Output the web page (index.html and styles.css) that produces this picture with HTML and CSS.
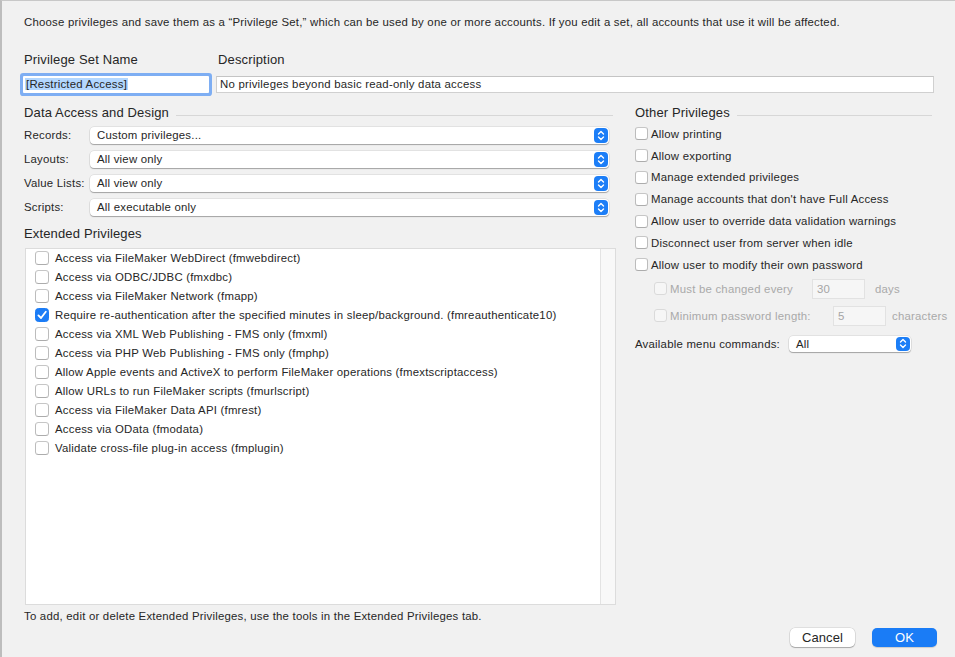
FILE: index.html
```html
<!DOCTYPE html>
<html>
<head>
<meta charset="utf-8">
<link rel="stylesheet" href="styles.css">
</head>
<body>
<div class="win">
  <p class="intro">Choose privileges and save them as a “Privilege Set,” which can be used by one or more accounts. If you edit a set, all accounts that use it will be affected.</p>

  <div class="name-row">
    <div class="name-col">
      <div class="hdr">Privilege Set Name</div>
      <div class="field focus"><span class="sel">[Restricted Access]</span></div>
    </div>
    <div class="desc-col">
      <div class="hdr">Description</div>
      <div class="field desc">No privileges beyond basic read-only data access</div>
    </div>
  </div>

  <div class="main">
    <div class="left">
      <div class="sect">Data Access and Design</div>
      <div class="prows">
        <div class="prow"><span class="plabel">Records:</span><div class="popup"><span>Custom privileges...</span><i class="step"><svg viewBox="0 0 14 15" width="14" height="15"><path d="M4.5 6 7 3.5 9.5 6M4.5 9 7 11.5 9.5 9" fill="none" stroke="#fff" stroke-width="1.4" stroke-linecap="round" stroke-linejoin="round"/></svg></i></div></div>
        <div class="prow"><span class="plabel">Layouts:</span><div class="popup"><span>All view only</span><i class="step"><svg viewBox="0 0 14 15" width="14" height="15"><path d="M4.5 6 7 3.5 9.5 6M4.5 9 7 11.5 9.5 9" fill="none" stroke="#fff" stroke-width="1.4" stroke-linecap="round" stroke-linejoin="round"/></svg></i></div></div>
        <div class="prow"><span class="plabel">Value Lists:</span><div class="popup"><span>All view only</span><i class="step"><svg viewBox="0 0 14 15" width="14" height="15"><path d="M4.5 6 7 3.5 9.5 6M4.5 9 7 11.5 9.5 9" fill="none" stroke="#fff" stroke-width="1.4" stroke-linecap="round" stroke-linejoin="round"/></svg></i></div></div>
        <div class="prow"><span class="plabel">Scripts:</span><div class="popup"><span>All executable only</span><i class="step"><svg viewBox="0 0 14 15" width="14" height="15"><path d="M4.5 6 7 3.5 9.5 6M4.5 9 7 11.5 9.5 9" fill="none" stroke="#fff" stroke-width="1.4" stroke-linecap="round" stroke-linejoin="round"/></svg></i></div></div>
      </div>
      <div class="hdr ext">Extended Privileges</div>
      <div class="list">
        <div class="list-body">
          <div class="lrow"><i class="cb"></i>Access via FileMaker WebDirect (fmwebdirect)</div>
          <div class="lrow"><i class="cb"></i>Access via ODBC/JDBC (fmxdbc)</div>
          <div class="lrow"><i class="cb"></i>Access via FileMaker Network (fmapp)</div>
          <div class="lrow"><i class="cb on"><svg viewBox="0 0 14 14" width="14" height="14"><path d="M3.4 7.4 6 10 10.8 3.8" fill="none" stroke="#fff" stroke-width="1.8" stroke-linecap="round" stroke-linejoin="round"/></svg></i>Require re-authentication after the specified minutes in sleep/background. (fmreauthenticate10)</div>
          <div class="lrow"><i class="cb"></i>Access via XML Web Publishing - FMS only (fmxml)</div>
          <div class="lrow"><i class="cb"></i>Access via PHP Web Publishing - FMS only (fmphp)</div>
          <div class="lrow"><i class="cb"></i>Allow Apple events and ActiveX to perform FileMaker operations (fmextscriptaccess)</div>
          <div class="lrow"><i class="cb"></i>Allow URLs to run FileMaker scripts (fmurlscript)</div>
          <div class="lrow"><i class="cb"></i>Access via FileMaker Data API (fmrest)</div>
          <div class="lrow"><i class="cb"></i>Access via OData (fmodata)</div>
          <div class="lrow"><i class="cb"></i>Validate cross-file plug-in access (fmplugin)</div>
        </div>
        <div class="scroll"></div>
      </div>
      <p class="foot">To add, edit or delete Extended Privileges, use the tools in the Extended Privileges tab.</p>
    </div>

    <div class="right">
      <div class="sect">Other Privileges</div>
      <div class="checks">
        <div class="crow"><i class="cb sm"></i>Allow printing</div>
        <div class="crow"><i class="cb sm"></i>Allow exporting</div>
        <div class="crow"><i class="cb sm"></i>Manage extended privileges</div>
        <div class="crow"><i class="cb sm"></i>Manage accounts that don't have Full Access</div>
        <div class="crow"><i class="cb sm"></i>Allow user to override data validation warnings</div>
        <div class="crow"><i class="cb sm"></i>Disconnect user from server when idle</div>
        <div class="crow"><i class="cb sm"></i>Allow user to modify their own password</div>
      </div>
      <div class="sub">
        <div class="srow"><i class="cb sm dis"></i><span class="slabel w1">Must be changed every</span><span class="num">30</span><span class="unit u1">days</span></div>
        <div class="srow"><i class="cb sm dis"></i><span class="slabel w2">Minimum password length:</span><span class="num">5</span><span class="unit u2">characters</span></div>
      </div>
      <div class="mrow"><span class="mlabel">Available menu commands:</span><div class="popup small"><span>All</span><i class="step"><svg viewBox="0 0 14 15" width="14" height="15"><path d="M4.5 6 7 3.5 9.5 6M4.5 9 7 11.5 9.5 9" fill="none" stroke="#fff" stroke-width="1.4" stroke-linecap="round" stroke-linejoin="round"/></svg></i></div></div>
    </div>
  </div>

  <div class="buttons">
    <div class="btn cancel">Cancel</div>
    <div class="btn ok">OK</div>
  </div>
</div>
</body>
</html>
```

FILE: styles.css
```css
* { box-sizing: border-box; }
html, body { margin: 0; padding: 0; }
body {
  width: 955px;
  height: 657px;
  overflow: hidden;
  background: #f1f1f1;
  font-family: "Liberation Sans", Arial, sans-serif;
  font-size: 11.4px;
  letter-spacing: 0.22px;
  color: #262626;
}
.win {
  height: 657px;
  border-top: 1px solid #c8c8c8;
  border-left: 2px solid #bdbdbd;
  padding: 0 18px 0 22px;
  display: flex;
  flex-direction: column;
}
.intro {
  margin: 14px 0 0;
  line-height: 14px;
  white-space: nowrap;
}
.name-row {
  display: flex;
  margin-top: 23px;
}
.hdr {
  font-size: 13px;
  letter-spacing: 0.15px;
  line-height: 16px;
}
.name-col { width: 194px; }
.desc-col { flex: 1; margin-right: 3px; }
.field {
  height: 17px;
  margin-top: 8px;
  background: #fff;
  line-height: 16px;
  white-space: nowrap;
  overflow: hidden;
}
.focus {
  width: 186px;
  margin-left: -1px;
  padding-left: 2px;
  box-shadow: 0 0 0 3px #7eaef3, 0 0 0 1px #5b96ee;
  border-radius: 1px;
}
.sel { background: #b3d7ff; padding: 0 1px; }
.desc {
  margin-left: -2px;
  border: 1px solid #d0d0d0;
  border-top-color: #c4c4c4;
  padding-left: 3px;
  line-height: 15px;
}
.main {
  display: flex;
  margin-top: 11px;
}
.left { width: 592px; flex: none; }
.right { width: 300px; flex: none; margin-left: 19px; }
.sect {
  display: flex;
  align-items: center;
  font-size: 13px;
  letter-spacing: 0.15px;
  line-height: 16px;
  white-space: nowrap;
  padding-top: 1px;
}
.sect::after {
  content: "";
  flex: 1;
  height: 1px;
  background: #d7d7d7;
  margin: 5px 3px 0 7px;
}
.prows { margin-top: 2px; }
.prow {
  display: flex;
  align-items: center;
  height: 24px;
}
.plabel { width: 66px; flex: none; }
.popup {
  flex: 1;
  height: 17px;
  margin-right: 7px;
  background: #fff;
  border-radius: 4px;
  box-shadow: 0 0 0 0.5px rgba(0,0,0,0.12), 0 1px 1px rgba(0,0,0,0.28);
  display: flex;
  align-items: center;
  justify-content: space-between;
  padding-left: 7px;
  padding-right: 1px;
}
.step {
  display: block;
  width: 14px;
  height: 15px;
  border-radius: 4px;
  background: #1c7ef7;
}
.step svg { display: block; }
.ext { margin-top: 7px; }
.list {
  margin: 6px 0 0 1px;
  height: 357px;
  background: #fff;
  border: 1px solid #dcdcdc;
  display: flex;
}
.list-body { flex: 1; padding: 0 0 0 9px; margin-top: -1px; }
.lrow {
  display: flex;
  align-items: center;
  height: 19px;
  white-space: nowrap;
}
.scroll {
  width: 15px;
  background: #f8f8f8;
  border-left: 1px solid #e3e3e3;
}
.cb {
  display: inline-block;
  flex: none;
  width: 14px;
  height: 14px;
  background: #fff;
  border: 1px solid #bcbcbc;
  border-top-color: #c6c6c6;
  border-bottom-color: #acacac;
  border-radius: 3.5px;
  margin-right: 6px;
}
.cb.on {
  background: #1b7cf6;
  border-color: #1b7cf6;
  position: relative;
}
.cb.on svg { position: absolute; left: -1px; top: -1px; }
.foot {
  margin: 4px 0 0;
  line-height: 14px;
  white-space: nowrap;
}
.checks { margin-top: 2px; }
.crow {
  display: flex;
  align-items: center;
  height: 21.8px;
  white-space: nowrap;
}
.cb.sm {
  width: 13px;
  height: 13px;
  margin-right: 3px;
  border-radius: 3px;
}
.sub { margin-top: 3px; padding-left: 19px; }
.srow {
  display: flex;
  align-items: center;
  height: 20px;
  color: #a9a9a9;
  white-space: nowrap;
}
.srow > * { flex: none; }
.srow + .srow { margin-top: 7px; }
.cb.dis { border-color: #dadada; background: #f6f6f6; }
.w1 { width: 142px; }
.w2 { width: 163px; }
.num {
  width: 53px;
  height: 20px;
  background: #f6f6f6;
  border: 1px solid #e2e2e2;
  padding-left: 4px;
  line-height: 18px;
  color: #a5a5a5;
}
.u1 { margin-left: 10px; }
.u2 { margin-left: 6px; }
.mrow {
  display: flex;
  align-items: center;
  height: 20px;
  margin-top: 8px;
  white-space: nowrap;
}
.mlabel { width: 154px; flex: none; }
.popup.small {
  flex: none;
  width: 122px;
  height: 16px;
  margin-right: 0;
}
.popup.small .step { height: 14px; }
.popup.small .step svg { margin-top: -0.5px; }
.buttons {
  margin-top: auto;
  margin-bottom: 10px;
  display: flex;
  justify-content: flex-end;
  gap: 17px;
}
.btn {
  height: 19px;
  border-radius: 5px;
  font-size: 13px;
  letter-spacing: 0.1px;
  line-height: 19px;
  text-align: center;
}
.cancel {
  width: 65px;
  background: #fff;
  box-shadow: 0 0 0 0.5px rgba(0,0,0,0.15), 0 1px 1px rgba(0,0,0,0.25);
}
.ok {
  width: 65px;
  background: #1a7cf6;
  color: #fff;
  box-shadow: 0 1px 1px rgba(0,0,0,0.15);
}
```
